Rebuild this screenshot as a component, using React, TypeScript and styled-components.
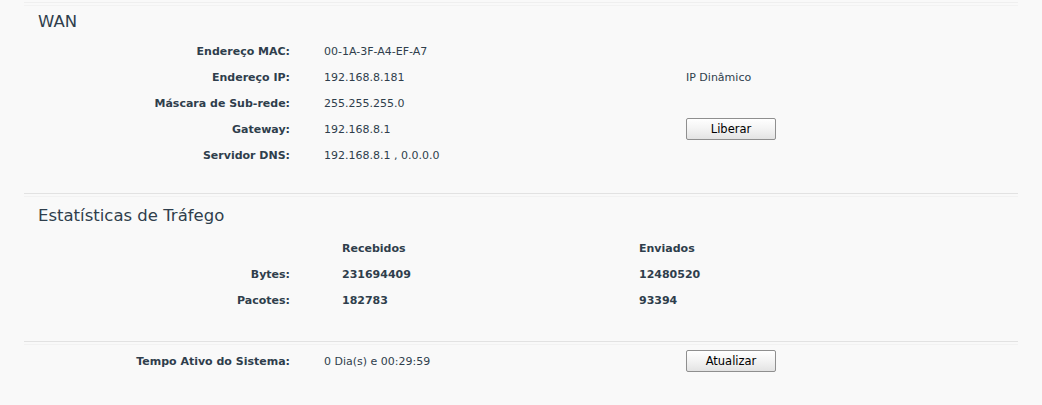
import React from 'react'
import styled, { createGlobalStyle } from 'styled-components'

const GlobalStyle = createGlobalStyle`
  html, body {
    margin: 0;
    padding: 0;
    background: #f9f9f9;
  }
  body {
    font-family: "DejaVu Sans", Verdana, "Liberation Sans", sans-serif;
    font-size: 11px;
    color: #2f3e4c;
  }
`

interface InfoRow {
  label: string
  value: string
  note?: string
  action?: string
}

const wanRows: InfoRow[] = [
  { label: 'Endereço MAC:', value: '00-1A-3F-A4-EF-A7' },
  { label: 'Endereço IP:', value: '192.168.8.181', note: 'IP Dinâmico' },
  { label: 'Máscara de Sub-rede:', value: '255.255.255.0' },
  { label: 'Gateway:', value: '192.168.8.1', action: 'Liberar' },
  { label: 'Servidor DNS:', value: '192.168.8.1 , 0.0.0.0' }
]

const traffic = [
  { label: 'Bytes:', received: '231694409', sent: '12480520' },
  { label: 'Pacotes:', received: '182783', sent: '93394' }
]

export default function App() {
  return (
    <>
      <GlobalStyle />
      <Page>
        <Section $top={3} $bottom={25} $faint>
          <Title>WAN</Title>
          <Rows>
            {wanRows.map((r) => (
              <Row key={r.label}>
                <Label>{r.label}</Label>
                <Value>{r.value}</Value>
                <Extra>
                  {r.note}
                  {r.action && <Button>{r.action}</Button>}
                </Extra>
              </Row>
            ))}
          </Rows>
        </Section>

        <Section $top={6} $bottom={28}>
          <Title>Estatísticas de Tráfego</Title>
          <Rows $offset={3}>
            <Row>
              <Label />
              <StatCell>Recebidos</StatCell>
              <StatCell>Enviados</StatCell>
            </Row>
            {traffic.map((t) => (
              <Row key={t.label}>
                <Label>{t.label}</Label>
                <StatCell>{t.received}</StatCell>
                <StatCell>{t.sent}</StatCell>
              </Row>
            ))}
          </Rows>
        </Section>

        <Section $top={6} $bottom={0}>
          <Row>
            <Label>Tempo Ativo do Sistema:</Label>
            <Value>0 Dia(s) e 00:29:59</Value>
            <Extra><Button>Atualizar</Button></Extra>
          </Row>
        </Section>
      </Page>
    </>
  )
}

const Page = styled.div`
  width: 994px;
  margin-left: 24px;
  padding-top: 2px;
`

const Section = styled.div<{ $top: number; $bottom: number; $faint?: boolean }>`
  border-top: 1px solid ${(p) => (p.$faint ? '#efefef' : '#e2e2e2')};
  box-shadow: inset 0 2px 0 #f9f9f9, inset 0 3px 0 #f2f2f2;
  padding: ${(p) => `${p.$top}px 0 ${p.$bottom}px`};
`

const Title = styled.div`
  height: 32px;
  line-height: 32px;
  padding-left: 14px;
  font-size: 16.5px;
  color: #2f3e4c;
`

const Rows = styled.div<{ $offset?: number }>`
  display: flex;
  flex-direction: column;
  margin-top: ${(p) => p.$offset ?? 0}px;
`

const Row = styled.div`
  display: flex;
  align-items: center;
  height: 26px;
`

const Label = styled.div`
  width: 266px;
  flex-shrink: 0;
  text-align: right;
  font-weight: bold;
`

const Value = styled.div`
  width: 362px;
  margin-left: 34px;
  flex-shrink: 0;
`

const Extra = styled.div`
  display: flex;
  align-items: center;
`

const StatCell = styled.div`
  width: 297px;
  flex-shrink: 0;
  font-weight: bold;
  &:nth-child(2) {
    margin-left: 52px;
  }
`

const Button = styled.button`
  width: 90px;
  height: 22px;
  padding: 0;
  border: 1px solid #8f8f8f;
  border-radius: 2px;
  background: linear-gradient(180deg, #ffffff 0%, #f3f3f3 50%, #e3e3e3 100%);
  font-family: "DejaVu Sans", Verdana, "Liberation Sans", sans-serif;
  font-size: 11.5px;
  color: #000;
  cursor: pointer;
`
